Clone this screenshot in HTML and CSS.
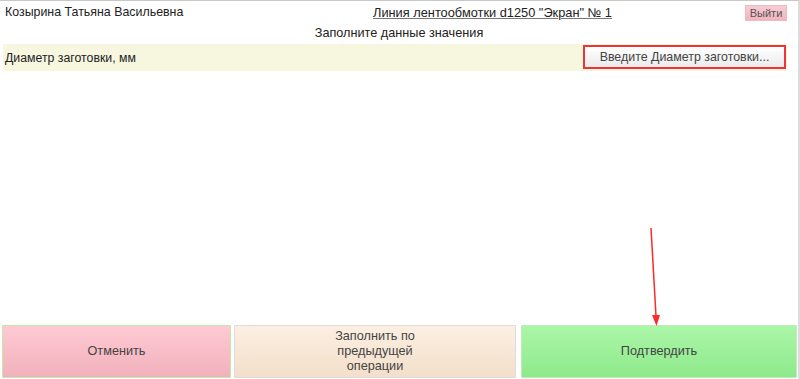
FILE: index.html
```html
<!DOCTYPE html>
<html lang="ru">
<head>
    <meta charset="UTF-8">
    <meta name="viewport" content="width=device-width, initial-scale=1.0">
    <title>Ввод значений</title>
    <link rel="stylesheet" href="styles.css">
</head>
<body>
    <div class="page">
        <div class="header">
            <div class="user">Козырина Татьяна Васильевна</div>
            <a class="line-title" href="#">Линия лентообмотки d1250 "Экран" № 1</a>
            <button class="exit-btn">Выйти</button>
        </div>

        <div class="subtitle">Заполните данные значения</div>

        <div class="field-row">
            <div class="field-label">Диаметр заготовки, мм</div>
            <button class="field-input">Введите Диаметр заготовки...</button>
        </div>

        <div class="spacer"></div>

        <div class="actions">
            <button class="action cancel">Отменить</button>
            <button class="action prev">Заполнить по<br>предыдущей<br>операции</button>
            <button class="action confirm">Подтвердить</button>
        </div>

        <!-- annotation arrow -->
        <svg class="arrow" width="800" height="379" viewBox="0 0 800 379">
            <line x1="651" y1="228" x2="656" y2="316" stroke="#ff2a2a" stroke-width="1.5"/>
            <polygon points="652,315 660,315 656.5,326" fill="#ff2a2a"/>
        </svg>
    </div>
</body>
</html>
```

FILE: styles.css
```css
* {
    margin: 0;
    padding: 0;
    box-sizing: border-box;
}

body {
    font-family: "Liberation Sans", Arial, sans-serif;
    font-size: 12.7px;
    color: #333;
    background: white;
}

.page {
    position: relative;
    width: 800px;
    height: 379px;
    border-top: 1px solid #c8c8c8;
    border-right: 2px solid #dcdcdc;
    display: flex;
    flex-direction: column;
}

.header {
    display: flex;
    align-items: center;
    height: 22px;
    padding: 0 11px 0 5px;
}

.user {
    width: 368px;
    font-size: 12.4px;
    color: #222;
}

.line-title {
    color: #222;
    font-size: 12.8px;
    text-decoration: underline;
    text-decoration-color: #777;
}

.exit-btn {
    margin-left: auto;
    margin-top: 1px;
    width: 42px;
    height: 16px;
    font-family: inherit;
    font-size: 11px;
    color: #555;
    background: linear-gradient(#f8ccd3, #f2b4bd);
    border: 1px solid #e8bcc2;
}

.subtitle {
    text-align: center;
    height: 21px;
    line-height: 20px;
    color: #222;
}

.field-row {
    display: flex;
    align-items: center;
    justify-content: space-between;
    height: 27px;
    margin: 0 11px 0 3px;
    padding: 0 1px 0 2px;
    background: #f7f6df;
}

.field-label {
    font-size: 12.3px;
    color: #222;
}

.field-input {
    width: 203px;
    height: 24px;
    margin-top: -1px;
    font-family: inherit;
    font-size: 12.4px;
    color: #444;
    background: linear-gradient(#ffffff, #ebebeb);
    border: 2px solid #ee3434;
}

.spacer {
    flex: 1;
}

.actions {
    display: flex;
    gap: 3px;
    padding: 0 0 1px 2px;
    height: 54px;
}

.action {
    height: 53px;
    font-family: inherit;
    font-size: 12.7px;
    line-height: 15px;
    color: #444;
    border-radius: 1px;
}

.cancel {
    width: 229px;
    background: linear-gradient(#fecad3, #f1b1bc);
    border: 1px solid #bfeaa8;
}

.prev {
    width: 282px;
    background: linear-gradient(#fcefe2, #f3dfca);
    border: 1px solid #dcdcdc;
}

.confirm {
    width: 276px;
    margin-left: 2px;
    background: linear-gradient(#abf6a8, #8eea8b);
    border: 1px solid #c3e8bd;
}

.arrow {
    position: absolute;
    top: -1px;
    left: 0;
    pointer-events: none;
}
```
